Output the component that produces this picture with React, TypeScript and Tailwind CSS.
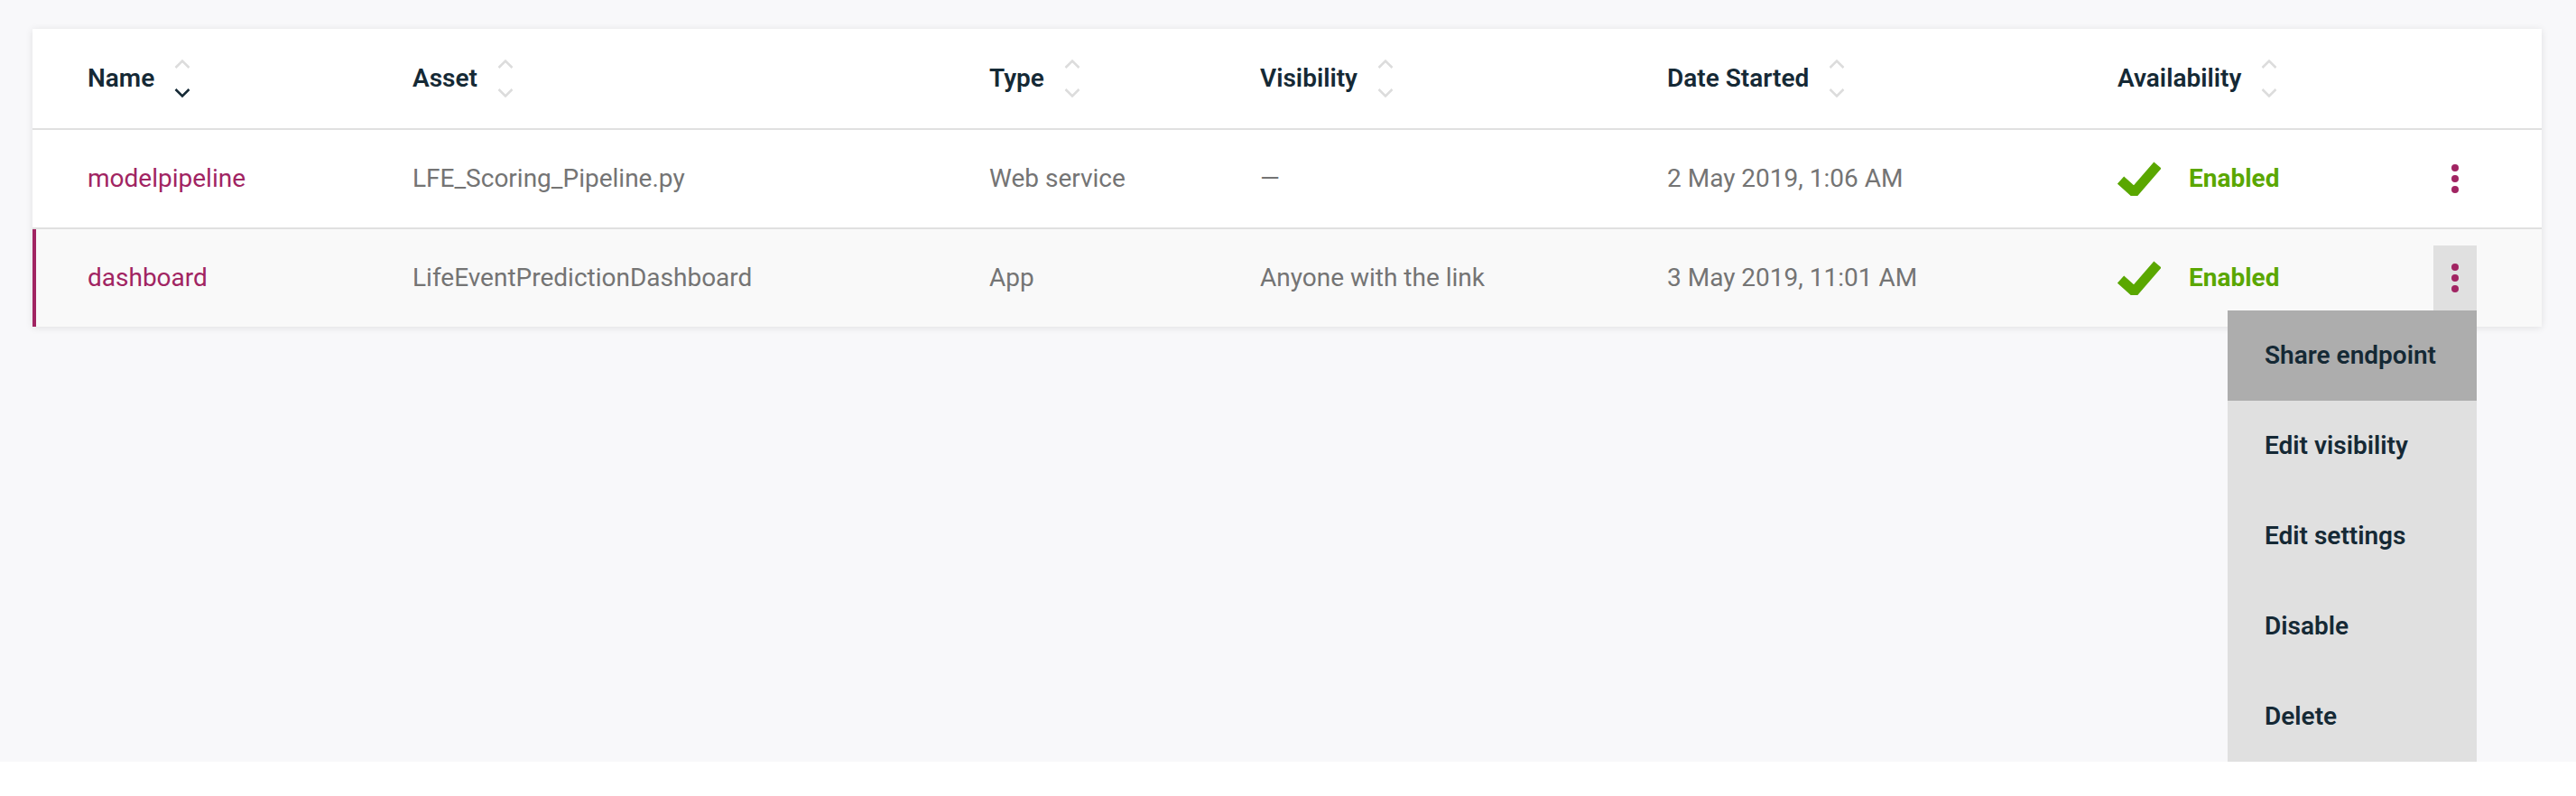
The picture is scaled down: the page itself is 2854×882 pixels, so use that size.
import React from "react";

const headers = [
  { label: "Name", active: true },
  { label: "Asset" },
  { label: "Type" },
  { label: "Visibility" },
  { label: "Date Started" },
  { label: "Availability" },
];

const rows = [
  {
    name: "modelpipeline",
    asset: "LFE_Scoring_Pipeline.py",
    type: "Web service",
    visibility: "—",
    date: "2 May 2019, 1:06 AM",
    open: false,
  },
  {
    name: "dashboard",
    asset: "LifeEventPredictionDashboard",
    type: "App",
    visibility: "Anyone with the link",
    date: "3 May 2019, 11:01 AM",
    open: true,
  },
];

const menuItems = ["Share endpoint", "Edit visibility", "Edit settings", "Disable", "Delete"];

const grid = "grid grid-cols-[360px_639px_300px_451px_499px_1fr_48px] items-center pr-[72px]";

function SortArrows({ active }: { active?: boolean }) {
  return (
    <svg width="18" height="44" viewBox="0 0 18 44" fill="none" className="ml-[22px] shrink-0">
      <path d="M1.5 10 L9 2.5 L16.5 10" stroke="#dcdcdc" strokeWidth="2.5" />
      <path d="M1.5 34 L9 41.5 L16.5 34" stroke={active ? "#152935" : "#dcdcdc"} strokeWidth="2.5" />
    </svg>
  );
}

function Check() {
  return (
    <svg width="48" height="38" viewBox="0 0 48 38" className="shrink-0">
      <polyline points="3.5,20.5 18.5,34 44.5,4" fill="none" stroke="#5aa700" strokeWidth="11" strokeLinejoin="miter" />
    </svg>
  );
}

function Kebab({ open }: { open: boolean }) {
  return (
    <div className="relative">
      <button
        className={`flex h-[72px] w-[48px] flex-col items-center justify-center gap-[4px] ${
          open ? "bg-[#e0e0e0]" : ""
        }`}
      >
        <span className="h-[8px] w-[8px] rounded-full bg-[#a12462]" />
        <span className="h-[8px] w-[8px] rounded-full bg-[#a12462]" />
        <span className="h-[8px] w-[8px] rounded-full bg-[#a12462]" />
      </button>
      {open && (
        <ul className="absolute right-0 top-full z-10 w-[276px] bg-[#e0e0e0]">
          {menuItems.map((item, i) => (
            <li
              key={item}
              className={`flex h-[100px] items-center pl-[41px] text-[28px] font-semibold text-[#152935] ${
                i === 0 ? "bg-[#adadad]" : ""
              }`}
            >
              {item}
            </li>
          ))}
        </ul>
      )}
    </div>
  );
}

export default function App() {
  return (
    <div className="min-h-screen bg-white" style={{ fontFamily: "Roboto, 'Noto Sans', sans-serif" }}>
      <div className="h-[844px] overflow-hidden bg-[#f8f8fa] pl-[36px] pr-[38px] pt-[32px]">
        <div className="bg-white shadow-[0_1px_8px_rgba(0,0,0,0.1)]">
          <div className={`${grid} h-[112px] border-b-2 border-[#e0e0e0] pl-[61px]`}>
            {headers.map((h) => (
              <div key={h.label} className="flex items-center">
                <span className="text-[28px] font-semibold text-[#152935]">{h.label}</span>
                <SortArrows active={h.active} />
              </div>
            ))}
            <div />
          </div>
          {rows.map((r, i) => (
            <div
              key={r.name}
              className={`${grid} text-[28px] text-[#747474] ${
                i < rows.length - 1 ? "h-[110px] border-b-2 border-[#e0e0e0]" : "h-[108px]"
              } ${r.open ? "border-l-4 border-l-[#a12462] bg-[#f9f9f9] pl-[57px]" : "pl-[61px]"}`}
            >
              <div className="text-[#a12462]">{r.name}</div>
              <div>{r.asset}</div>
              <div>{r.type}</div>
              <div>{r.visibility}</div>
              <div>{r.date}</div>
              <div className="flex items-center gap-[31px]">
                <Check />
                <span className="font-bold text-[#5aa700]">Enabled</span>
              </div>
              <Kebab open={r.open} />
            </div>
          ))}
        </div>
      </div>
    </div>
  );
}
